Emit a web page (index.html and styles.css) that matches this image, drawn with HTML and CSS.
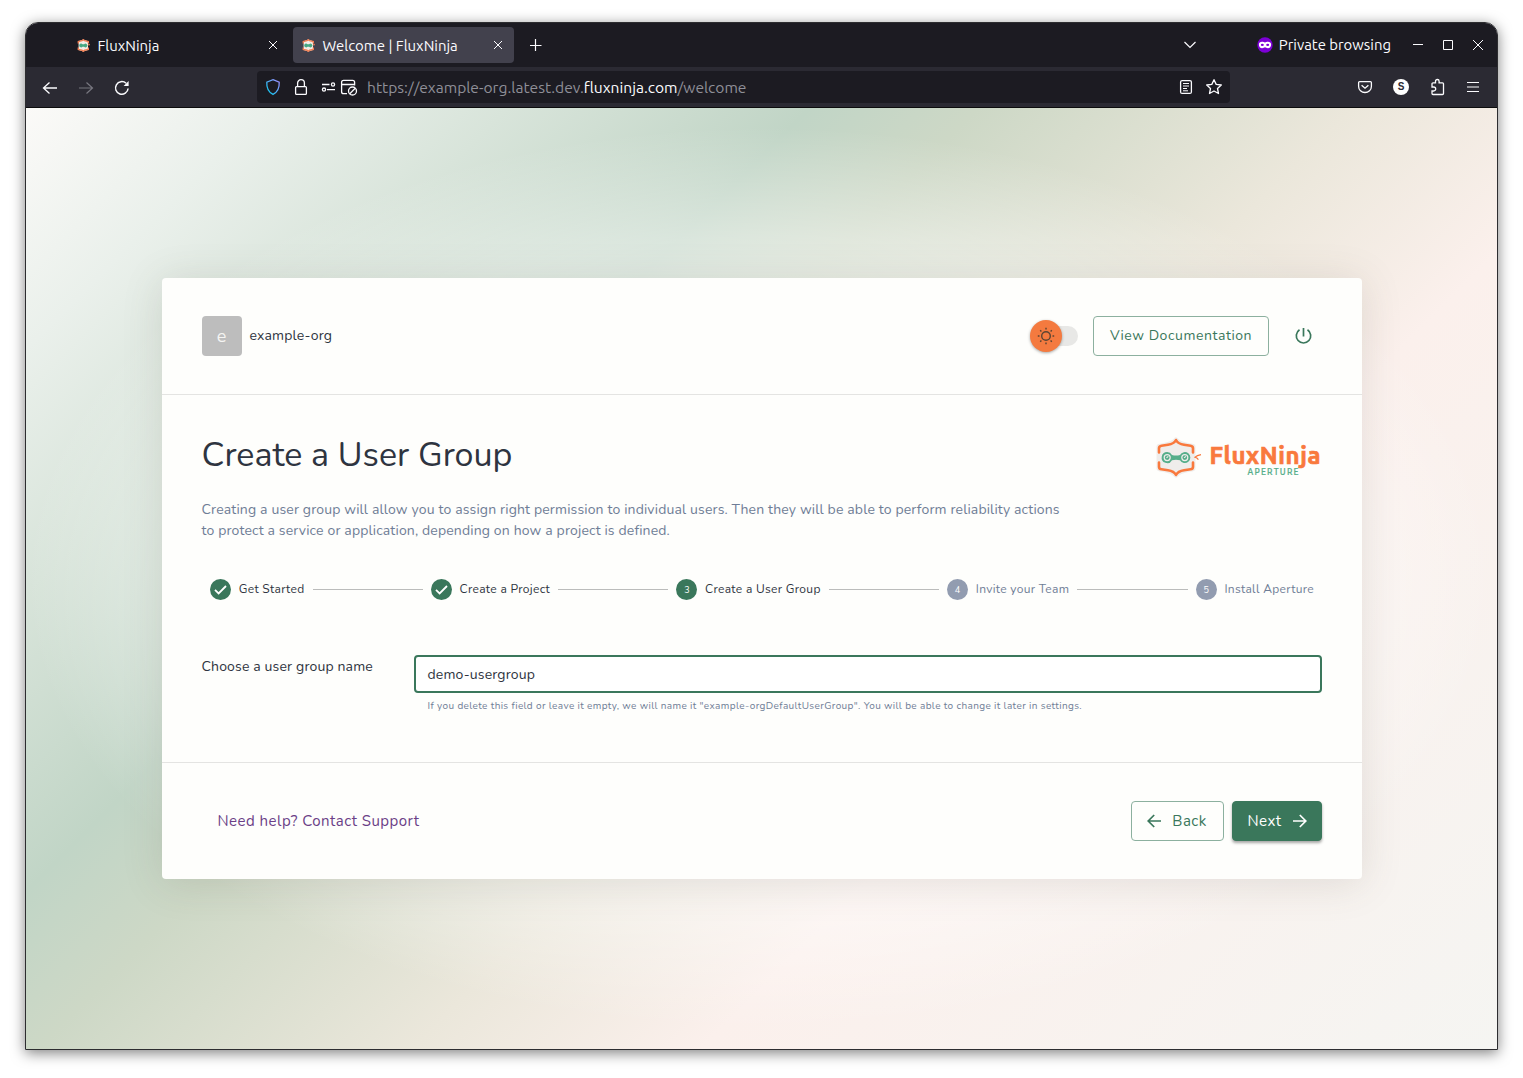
FILE: index.html
```
<!DOCTYPE html>
<html lang="en">
<head>
<meta charset="utf-8">
<title>Welcome | FluxNinja</title>
<link rel="stylesheet" href="styles.css">
</head>
<body>
<svg width="0" height="0" class="defs" aria-hidden="true">
  <defs>
    <symbol id="favicon" viewBox="0 0 13 13">
      <path d="M1.6 2.2 6.3.6 11 2.2V11L6.3 12.600 1.600 11z" fill="#f3ece6"/>
      <path d="M1.300 4.600V2.600L5 1.700 6.300.700 7.600 1.700 11.300 2.600V4.600M1.300 8.400v2L5 11.200 6.300 12.300 7.600 11.200 11.300 10.400v-2M11.300 6l1.500-.6" fill="none" stroke="#f08055" stroke-width="1.400"/>
      <path d="M4 4.600a1.900 1.900 0 0 1 1.500.6h1.600a1.900 1.900 0 1 1 0 2.600H5.500A1.900 1.900 0 1 1 4 4.600z" fill="#45a882"/>
    </symbol>
    <symbol id="close" viewBox="0 0 10 10"><path d="M1 1l8 8M9 1L1 9" fill="none" stroke="currentColor" stroke-width="1"/></symbol>
    <symbol id="check" viewBox="0 0 21 21"><circle cx="10.500" cy="10.500" r="10.500" fill="#3a775b"/><path d="M5 10.900l3.600 3.500 7.400-7.400" fill="none" stroke="#fff" stroke-width="1.800"/></symbol>
  </defs>
</svg>
<div class="window">
  <header class="tabs">
    <div class="tab"><svg width="13" height="13"><use href="#favicon"/></svg><span>FluxNinja</span><svg class="x" width="10" height="10"><use href="#close"/></svg></div>
    <div class="tab active"><svg width="13" height="13"><use href="#favicon"/></svg><span>Welcome | FluxNinja</span><svg class="x" width="10" height="10"><use href="#close"/></svg></div>
    <svg class="plus" width="12" height="12" viewBox="0 0 12 12"><path d="M5.500 0v12M0 6.500h11.500" stroke="#fbfbfe" stroke-width="1.200"/></svg>
    <div class="wincontrols">
      <svg class="chev" width="14" height="8" viewBox="0 0 14 8"><path d="M1.500 1l5.500 5.500L12.500 1" fill="none" stroke="#fbfbfe" stroke-width="1.200"/></svg>
      <svg class="mask" width="16" height="16" viewBox="0 0 16 16"><circle cx="8" cy="8" r="7.700" fill="#7d00d6"/><path d="M1.900 7.500C1.900 5.600 3.200 4.800 5 4.800c1.300 0 2 .6 3 .6s1.700-.6 3-.6c1.800 0 3.100.8 3.100 2.700 0 2.200-1.300 3.700-3.200 3.700-1.400 0-1.900-1-2.900-1s-1.500 1-2.900 1c-1.900 0-3.200-1.500-3.200-3.700z" fill="#fff"/><ellipse cx="5.300" cy="7.900" rx="1.500" ry="1.100" fill="#7d00d6"/><ellipse cx="10.700" cy="7.900" rx="1.500" ry="1.100" fill="#7d00d6"/></svg>
      <span>Private browsing</span>
      <svg class="wc" width="70" height="12" viewBox="0 0 70 12" fill="none" stroke="#fbfbfe"><path d="M0 5.500h10M60 1l10 10M70 1l-10 10" stroke-width="1"/><path d="M30.500 1.500h9v9h-9z"/></svg>
    </div>
  </header>
  <nav class="toolbar">
    <svg class="down" width="92" height="20" viewBox="0 0 92 20" fill="none" stroke-width="1.500">
      <path d="M1.500 10h13.500M7.500 4.500l-6 5.500 6 5.500" stroke="#fbfbfe" stroke-width="1.300"/>
      <path d="M37 10h13M44.500 4.500l6 5.500-6 5.500" stroke="#77767f" stroke-width="1.200"/>
      <path d="M86.100 10.500a6.300 6.300 0 1 1-2-5.200" stroke="#fbfbfe"/><path d="M86.600 3v5h-5z" fill="#fbfbfe"/>
    </svg>
    <div class="urlbar">
      <svg width="94" height="20" viewBox="0 0 94 20" fill="none" stroke="#fbfbfe" stroke-width="1.300">
        <defs><linearGradient id="sh" x1="0" y1="1" x2="1" y2="0"><stop offset=".2" stop-color="#1fc0f0"/><stop offset="1" stop-color="#a58bff"/></linearGradient></defs>
        <path d="M8 2.600l6.200 2.500c.3 5-1.200 9.800-6.200 12.300C3 14.900 1.500 10.100 1.800 5.100z" stroke="url(#sh)"/>
        <rect x="30.600" y="9.600" width="10.800" height="7.800" rx="1"/><path d="M32.600 9.500V6.100a3.400 3.400 0 0 1 6.800 0V9.500"/>
        <path d="M57 7.500h7.500M62 12.600h8"/><circle cx="68" cy="7.500" r="1.600"/><circle cx="59" cy="12.600" r="1.600"/>
        <path d="M82 16.700h-3.400a2 2 0 0 1-2-2V5.300a2 2 0 0 1 2-2h9a2 2 0 0 1 2 2V8.500M76.600 7.500h13"/><circle cx="87.500" cy="14" r="4"/><path d="M84.800 16.700l5.400-5.400"/>
      </svg>
      <span class="url">https://example-org.latest.dev.<b>fluxninja.com</b>/welcome</span>
      <svg class="right" width="46" height="18" viewBox="0 0 46 18" fill="none" stroke="#fbfbfe" stroke-width="1.300">
        <rect x="2.600" y="2.600" width="10.800" height="12.800" rx="1.500"/><path d="M5 5.500h6M5 8h6M5 10.500h4M5 12.800h5" stroke-width="1"/>
        <path d="M36 1.700l2.200 4.700 5.100.6-3.800 3.500 1 5-4.500-2.500-4.500 2.500 1-5L28.700 7l5.100-.6z" stroke-linejoin="round"/>
      </svg>
    </div>
    <div class="tools">
      <svg width="16" height="16" viewBox="0 0 16 16" fill="none" stroke="#fbfbfe" stroke-width="1.300"><path d="M2.600 2.600h10.800a1 1 0 0 1 1 1V7.500a6.400 6 0 0 1-12.800 0V3.600a1 1 0 0 1 1-1z"/><path d="M4.600 6.200L8 9.200l3.400-3"/></svg>
      <span class="avatar">S</span>
      <svg width="16" height="18" viewBox="0 0 16 18" fill="none" stroke="#fbfbfe" stroke-width="1.300"><path d="M2 8V5.800a1 1 0 0 1 1-1h2.500V3.300a1.700 1.700 0 0 1 3.600 0v1.500h3.400a1 1 0 0 1 1 1v9.700a1 1 0 0 1-1 1H3a1 1 0 0 1-1-1V13h1.700a1.900 1.900 0 0 0 0-4H2z"/></svg>
      <svg width="12" height="12" viewBox="0 0 12 12" stroke="#fbfbfe" stroke-width="1.200"><path d="M0 1.500h12M0 6h12M0 10.500h12"/></svg>
    </div>
  </nav>
  <main class="page">
    <section class="card">
      <div class="head">
        <div class="orgicon">e</div><span class="org">example-org</span>
        <div class="switch"><div class="thumb"><svg width="18" height="18" viewBox="0 0 18 18" fill="none" stroke="#5a4433" stroke-width="1.400"><circle cx="9" cy="9" r="4.300"/><path d="M9 .8v1.700M9 15.500v1.700M.8 9h1.700M15.500 9h1.700M3.200 3.200l1.200 1.200M13.600 13.600l1.200 1.200M3.200 14.800l1.200-1.200M13.600 4.400l1.200-1.200"/></svg></div></div>
        <a class="btn docs">View Documentation</a>
        <svg class="power" width="18" height="18" viewBox="0 0 18 18" fill="none" stroke="#3a775b" stroke-width="1.700"><path d="M9.500 1v8.500M5.500 2.800a7.200 7.200 0 1 0 8 0"/></svg>
      </div>
      <div class="body">
        <div class="titlerow">
          <h1>Create a User Group</h1>
          <svg class="logo" width="168" height="42" viewBox="0 0 168 42">
            <path d="M4 9.500C8 8.200 17 8.200 21 3c4 5.200 13 5.200 17 6.500V31.500c-4 1.300-13 1.300-17 6.500-4-5.200-13-5.200-17-6.500z" fill="#efedeb" stroke="#efedeb" stroke-width="5" stroke-linejoin="round"/>
            <path d="M4 15.500V11.300Q4 9 6.500 8.700l6.500-.9Q19 6.900 21 3 23 6.900 29 7.800l6.500.9Q38 9 38 11.300V15.500M4 25.500v4.200Q4 32 6.500 32.300l6.500.9Q19 34.100 21 38 23 34.100 29 33.200l6.500-.9Q38 32 38 29.700V25.500" fill="none" stroke="#f9793d" stroke-width="2.600" stroke-linecap="round" stroke-linejoin="round"/>
            <path d="M12.200 15.100a5.500 5.500 0 0 1 4.800 2.900q4 1.100 8 0a5.500 5.500 0 1 1 0 5.200q-4-1.100-8 0A5.500 5.500 0 1 1 12.200 15.100z" fill="#55ae8a"/>
            <g fill="none" stroke="#efedeb" stroke-width="1.200"><circle cx="12.200" cy="20.600" r="3"/><circle cx="29.800" cy="20.600" r="3"/></g>
            <path d="M11.500 20.900l1.800-1.500M29.100 20.900l1.800-1.500" stroke="#efedeb" stroke-width="1.200"/>
            <path d="M46 17.600q-4 .6-6 2.600 2 .5 3.400 2.500" fill="none" stroke="#f9793d" stroke-width="1.200"/>
            <text x="54.500" y="27" class="l1" textLength="111">FluxNinja</text>
            <text x="92.500" y="37.500" class="l2" textLength="51">APERTURE</text>
          </svg>
        </div>
        <p class="desc">Creating a user group will allow you to assign right permission to individual users. Then they will be able to perform reliability actions<br>to protect a service or application, depending on how a project is defined.</p>
        <div class="stepper">
          <div class="step"><svg width="21" height="21"><use href="#check"/></svg><span>Get Started</span></div><i></i>
          <div class="step"><svg width="21" height="21"><use href="#check"/></svg><span>Create a Project</span></div><i></i>
          <div class="step"><b class="num on">3</b><span>Create a User Group</span></div><i></i>
          <div class="step off"><b class="num">4</b><span>Invite your Team</span></div><i></i>
          <div class="step off"><b class="num">5</b><span>Install Aperture</span></div>
        </div>
        <div class="field">
          <label>Choose a user group name</label>
          <div class="inputcol">
            <div class="input">demo-usergroup</div>
            <div class="helper">If you delete this field or leave it empty, we will name it "example-orgDefaultUserGroup". You will be able to change it later in settings.</div>
          </div>
        </div>
      </div>
      <div class="foot">
        <a class="help">Need help? Contact Support</a>
        <a class="btn back"><svg width="14" height="14" viewBox="0 0 14 14" fill="none" stroke="#3a775b" stroke-width="1.700"><path d="M14 7H1.500M7.200 1L1.200 7l6 6"/></svg>Back</a>
        <a class="btn next">Next<svg width="14" height="14" viewBox="0 0 14 14" fill="none" stroke="#fff" stroke-width="1.700"><path d="M0 7h12.500M6.800 1l6 6-6 6"/></svg></a>
      </div>
    </section>
  </main>
</div>
</body>
</html>
```
FILE: styles.css
```
* { box-sizing: border-box; }
body { margin: 0; padding: 22px 25px 28px; height: 1078px; background: #fff; overflow: hidden; font-family: Nunito, "Open Sans", sans-serif; }
svg { display: block; flex: none; }
.defs { position: absolute; }
.window { height: 1028px; border: 1px solid #2d2d30; border-radius: 13px 13px 0 0; overflow: hidden; display: flex; flex-direction: column; box-shadow: 0 3px 14px rgba(0,0,0,.5); }

.tabs, .toolbar { font-family: Ubuntu, "Noto Sans", sans-serif; color: #fbfbfe; font-size: 15px; }
.tabs { height: 44px; background: #1c1b22; display: flex; align-items: center; }
.tab { display: flex; align-items: center; height: 36px; width: 221px; padding: 0 11px 0 9px; border-radius: 4px; white-space: nowrap; }
.tab:first-child { margin-left: 42px; margin-right: 4px; }
.tab span { margin-left: 7.500px; font-size: 14.930px; }
.tab .x { margin-left: auto; }
.tab.active { background: #42414d; }
.plus { margin-left: 16px; }
.wincontrols { margin-left: auto; display: flex; align-items: center; padding-right: 14px; }
.wincontrols span { font-size: 14.900px; padding-bottom: 2px; }
.mask { margin: 0 6px 0 60px; }
.wc { margin-left: 22px; overflow: visible; }

.toolbar { height: 41px; background: #2b2a33; border-bottom: 1px solid #0c0c0d; display: flex; align-items: center; padding: 0 18px 0 16px; }
.down { margin-top: 1px; }
.urlbar { margin-left: 123px; width: 973px; height: 32px; background: #1c1b22; border-radius: 4px; display: flex; align-items: center; padding: 0 6px 0 8px; font-size: 15.600px; color: #8f8f98; }
.url { margin-left: 8px; white-space: nowrap; }
.url b { font-weight: 400; color: #fbfbfe; }
.right { margin-left: auto; }
.tools { margin-left: auto; display: flex; align-items: center; }
.avatar { width: 16px; height: 16px; border-radius: 50%; background: #fff; color: #2b2a33; font: 700 10px/16px "Liberation Sans", sans-serif; text-align: center; margin: 0 21px 0 20px; }
.tools svg:last-child { margin-left: 21px; }

.page { flex: 1; padding: 170px 136px; background:
  radial-gradient(ellipse 50% 48% at 50% 50%, rgba(255,255,255,.7) 50%, rgba(255,255,255,.4) 76%, rgba(255,255,255,0) 100%),
  linear-gradient(135deg, #fbfaf8 0%, #eaf0eb 10%, #d8e4da 20%, #c1d5c6 32.500%, #cdd8c6 39.500%, #ebe7db 55%, #fbf0ec 67%, #f5f5f2 100%); }
.card { width: 1200px; height: 601px; background: #fefefc; border-radius: 4px; box-shadow: 0 4px 40px rgba(90,80,70,.15); color: #2e3440; font-size: 14px; letter-spacing: .15px; display: flex; flex-direction: column; }
.head { height: 117px; border-bottom: 1px solid #e4e4e2; display: flex; align-items: center; padding: 0 50px 0 40px; }
.orgicon { width: 40px; height: 40px; border-radius: 4px; background: #bdbdbd; color: #f5f5f3; font-size: 18px; line-height: 40px; text-align: center; padding-right: 1px; }
.org { margin-left: 7.500px; padding-bottom: 2px; }
.switch { margin-left: auto; width: 40px; height: 20px; border-radius: 10px; background: #e8e8e6; display: flex; align-items: center; }
.thumb { flex: none; width: 32px; height: 32px; margin-left: -8px; border-radius: 50%; background: #f47a3f; box-shadow: 0 1px 3px rgba(0,0,0,.35); display: grid; place-items: center; }
.btn { height: 40px; border: 1px solid #8cb09f; border-radius: 4px; color: #3a775b; display: flex; align-items: center; justify-content: center; letter-spacing: .47px; }
.docs { width: 176px; margin: 0 25px 0 15px; padding-bottom: 2px; letter-spacing: .56px; }

.body { height: 368px; border-bottom: 1px solid #e4e4e2; padding: 36px 40px 0; }
.titlerow { display: flex; justify-content: space-between; height: 48px; }
h1 { margin: 0 0 0 -.5px; font-size: 34px; font-weight: 400; letter-spacing: 0; line-height: 48px; }
.logo { margin: 6px -1px 0 0; }
.l1 { font: 700 24px Ubuntu, "Noto Sans", sans-serif; fill: #f9793d; stroke: #f9793d; stroke-width: .7px; letter-spacing: 0; }
.l2 { font: 500 8.500px Ubuntu, "Noto Sans", sans-serif; fill: #55ae8a; stroke: #55ae8a; stroke-width: .2px; letter-spacing: 0; }
.desc { margin: 20px 0 0 -.5px; line-height: 21px; color: #6f7d96; white-space: nowrap; }
.stepper { display: flex; align-items: center; margin-top: 38px; padding: 0 8px; height: 21px; font-size: 12px; letter-spacing: .31px; }
.step { display: flex; align-items: center; gap: 7.700px; white-space: nowrap; }
.step span { padding-bottom: 2px; }
.stepper i { flex: 1; height: 1px; background: #bbbcbb; margin: 0 8px; }
.off { color: #6f7d96; }
.num { width: 21px; height: 21px; border-radius: 50%; background: #929cb0; color: #fff; font-weight: 400; font-size: 9px; line-height: 22px; text-align: center; letter-spacing: 0; }
.num.on { background: #3a775b; }
.field { display: flex; margin-top: 55px; }
label { width: 212.500px; margin-left: -.5px; padding-top: 2px; }
.inputcol { flex: 1; }
.input { height: 38px; border: 2px solid #3a775b; border-radius: 4px; background: #fff; padding: 1px 11.500px 0; line-height: 34px; }
.helper { margin: 6px 0 0 13.500px; font-size: 10px; letter-spacing: .37px; line-height: 14px; color: #6f7d96; white-space: nowrap; }

.foot { flex: 1; display: flex; align-items: center; padding: 0 40px 0 55.500px; font-size: 15px; }
.help { margin-right: auto; color: #6b3f87; letter-spacing: .47px; }
.back { width: 93px; gap: 11px; padding-right: 1px; }
.next { width: 90px; margin-left: 8px; gap: 11px; background: #3a775b; border-color: #3a775b; color: #fff; box-shadow: 0 2px 3px rgba(0,0,0,.35); }
```
